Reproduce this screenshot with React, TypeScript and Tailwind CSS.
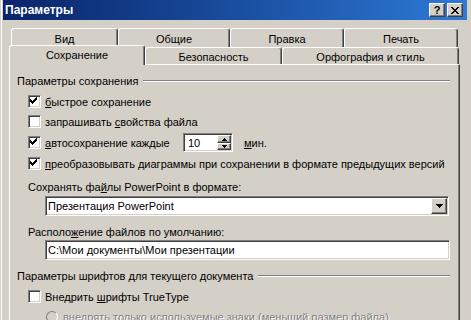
import type { ReactNode } from 'react';

/* Win2000 bevels */
const raised =
  'border border-t-white border-l-white border-r-[#404040] border-b-[#404040] shadow-[inset_-1px_-1px_0_#808080]';
const sunken =
  'border border-t-[#808080] border-l-[#808080] border-r-white border-b-white shadow-[inset_1px_1px_0_#404040,inset_-1px_-1px_0_#d4d0c8]';

function Check({ on }: { on?: boolean }) {
  const ys = [4, 5, 6, 5, 4, 3, 2];
  return (
    <span className={`relative block w-[13px] h-[13px] shrink-0 bg-white ${sunken}`}>
      {on && (
        <svg className="absolute left-0 top-0" width="11" height="11" shapeRendering="crispEdges">
          {ys.map((y, i) => (
            <rect key={i} x={1 + i} y={y - 1} width="1" height="3" fill="#000" />
          ))}
        </svg>
      )}
    </span>
  );
}

function Tab({ w, label, active, row }: { w: string; label: string; active?: boolean; row: 1 | 2 }) {
  const base =
    'flex justify-center shrink-0 bg-[#d4d0c8] border-t border-l border-r border-t-white border-l-white border-r-[#404040] rounded-t-[3px] shadow-[inset_-1px_0_0_#808080]';
  if (active)
    return <div className={`${base} ${w} relative z-10 -mt-[2px] h-[20px] pt-[2px]`}>{label}</div>;
  return (
    <div className={`${base} ${w} ${row === 1 ? 'h-[19px] pt-[3px]' : 'h-[17px] pt-[2px]'}`}>{label}</div>
  );
}

function TitleBtn({ children }: { children: ReactNode }) {
  return (
    <div className={`w-[16px] h-[14px] flex items-center justify-center bg-[#d4d0c8] ${raised}`}>
      {children}
    </div>
  );
}

function Row({ children, mt }: { children: ReactNode; mt: string }) {
  return <div className={`${mt} ml-[11px] h-[13px] flex items-center`}>{children}</div>;
}

function GroupHead({ label, mt }: { label: string; mt: string }) {
  return (
    <div className={`${mt} h-[14px] flex items-center`}>
      <span className="whitespace-nowrap">{label}</span>
      <span className="ml-[5px] flex-1 h-[2px] border-t border-b border-t-[#808080] border-b-white" />
    </div>
  );
}

export default function App() {
  return (
    <div className="w-[471px] h-[320px] overflow-hidden bg-[#d4d0c8] pl-[3px] pr-[4px] font-['Liberation_Sans',Arial,sans-serif] text-[11px] leading-[14px] text-black shadow-[inset_1px_0_0_#d4d0c8,inset_2px_0_0_#fff]">
      {/* title bar */}
      <div className="h-[20px] flex items-center bg-linear-to-r from-[#0a246a] to-[#2d7ad6] pl-[2px] pr-[4px]">
        <span className="text-white font-bold text-[12px] leading-[14px]">Параметры</span>
        <div className="ml-auto flex gap-[2px]">
          <TitleBtn>
            <span className="font-bold text-[11px] leading-[11px]">?</span>
          </TitleBtn>
          <TitleBtn>
            <svg width="8" height="7" viewBox="0 0 8 7" shapeRendering="crispEdges">
              <path d="M0 0h2v1h-2zM6 0h2v1h-2zM1 1h2v1h-2zM5 1h2v1h-2zM2 2h4v1h-4zM3 3h2v1h-2zM2 4h4v1h-4zM1 5h2v1h-2zM5 5h2v1h-2zM0 6h2v1h-2zM6 6h2v1h-2z" fill="#000" />
            </svg>
          </TitleBtn>
        </div>
      </div>

      {/* tabs */}
      <div className="mt-[8px] ml-[8px] flex">
        <Tab row={1} w="w-[107px]" label="Вид" />
        <Tab row={1} w="w-[112px]" label="Общие" />
        <Tab row={1} w="w-[114px]" label="Правка" />
        <Tab row={1} w="w-[114px]" label="Печать" />
      </div>
      <div className="ml-[6px] flex h-[17px]">
        <Tab row={2} active w="w-[136px]" label="Сохранение" />
        <Tab row={2} w="w-[137px]" label="Безопасность" />
        <Tab row={2} w="w-[177px]" label="Орфография и стиль" />
      </div>

      {/* panel */}
      <div className="ml-[6px] w-[451px] h-[300px] flex flex-col border-t border-l border-r border-t-white border-l-white border-r-[#404040] shadow-[inset_-1px_0_0_#808080] pl-[7px] pr-[9px]">
        <GroupHead mt="mt-[9px]" label="Параметры сохранения" />

        <Row mt="mt-[7px]">
          <Check on />
          <span className="ml-[4px]"><u>б</u>ыстрое сохранение</span>
        </Row>
        <Row mt="mt-[7px]">
          <Check />
          <span className="ml-[4px]">запрашивать <u>с</u>войства файла</span>
        </Row>
        <Row mt="mt-[8px]">
          <Check on />
          <span className="ml-[4px] w-[138px] whitespace-nowrap"><u>а</u>втосохранение каждые</span>
          <div className={`w-[50px] h-[19px] shrink-0 flex bg-white p-[1px] ${sunken}`}>
            <span className="flex-1 pl-[3px] flex items-center">10</span>
            <div className="w-[14px] flex flex-col">
              <div className={`h-[8px] flex items-center justify-center bg-[#d4d0c8] ${raised}`}>
                <svg width="5" height="3" shapeRendering="crispEdges"><path d="M2 0h1v1h1v1h1v1h-5v-1h1v-1h1z" fill="#000" /></svg>
              </div>
              <div className={`h-[7px] flex items-center justify-center bg-[#d4d0c8] ${raised}`}>
                <svg width="5" height="3" shapeRendering="crispEdges"><path d="M0 0h5v1h-1v1h-1v1h-1v-1h-1v-1h-1z" fill="#000" /></svg>
              </div>
            </div>
          </div>
          <span className="ml-[11px]"><u>м</u>ин.</span>
        </Row>
        <Row mt="mt-[8px]">
          <Check on />
          <span className="ml-[4px] whitespace-nowrap">
            <u>п</u>реобразовывать диаграммы при сохранении в формате предыдущих версий
          </span>
        </Row>

        <div className="mt-[10px] ml-[11px] h-[14px]">
          Сохранять фа<u>й</u>лы PowerPoint в формате:
        </div>
        <div className={`mt-[2px] ml-[28px] w-[404px] h-[20px] shrink-0 flex bg-white p-[1px] ${sunken}`}>
          <span className="flex-1 pl-[1px] flex items-center">Презентация PowerPoint</span>
          <div className={`w-[16px] flex items-center justify-center bg-[#d4d0c8] ${raised}`}>
            <svg width="7" height="4" shapeRendering="crispEdges"><path d="M0 0h7v1h-1v1h-1v1h-1v1h-1v-1h-1v-1h-1v-1h-1z" fill="#000" /></svg>
          </div>
        </div>

        <div className="mt-[9px] ml-[11px] h-[14px]">
          Располо<u>ж</u>ение файлов по умолчанию:
        </div>
        <div className={`mt-[1px] ml-[28px] w-[405px] h-[20px] shrink-0 flex items-center bg-white pl-[2px] ${sunken}`}>
          C:\Мои документы\Мои презентации
        </div>

        <GroupHead mt="mt-[9px]" label="Параметры шрифтов для текущего документа" />

        <Row mt="mt-[7px]">
          <Check />
          <span className="ml-[4px]">Внедрить <u>ш</u>рифты TrueType</span>
        </Row>
        <div className="mt-[7px] ml-[29px] h-[13px] flex items-center">
          <span className="w-[12px] h-[12px] shrink-0 rounded-full border border-t-[#808080] border-l-[#808080] border-r-white border-b-white" />
          <span className="ml-[5px] whitespace-nowrap text-[#808080] [text-shadow:1px_1px_0_#fff]">
            внедрять только используемые знаки (меньший размер файла)
          </span>
        </div>
      </div>
    </div>
  );
}
